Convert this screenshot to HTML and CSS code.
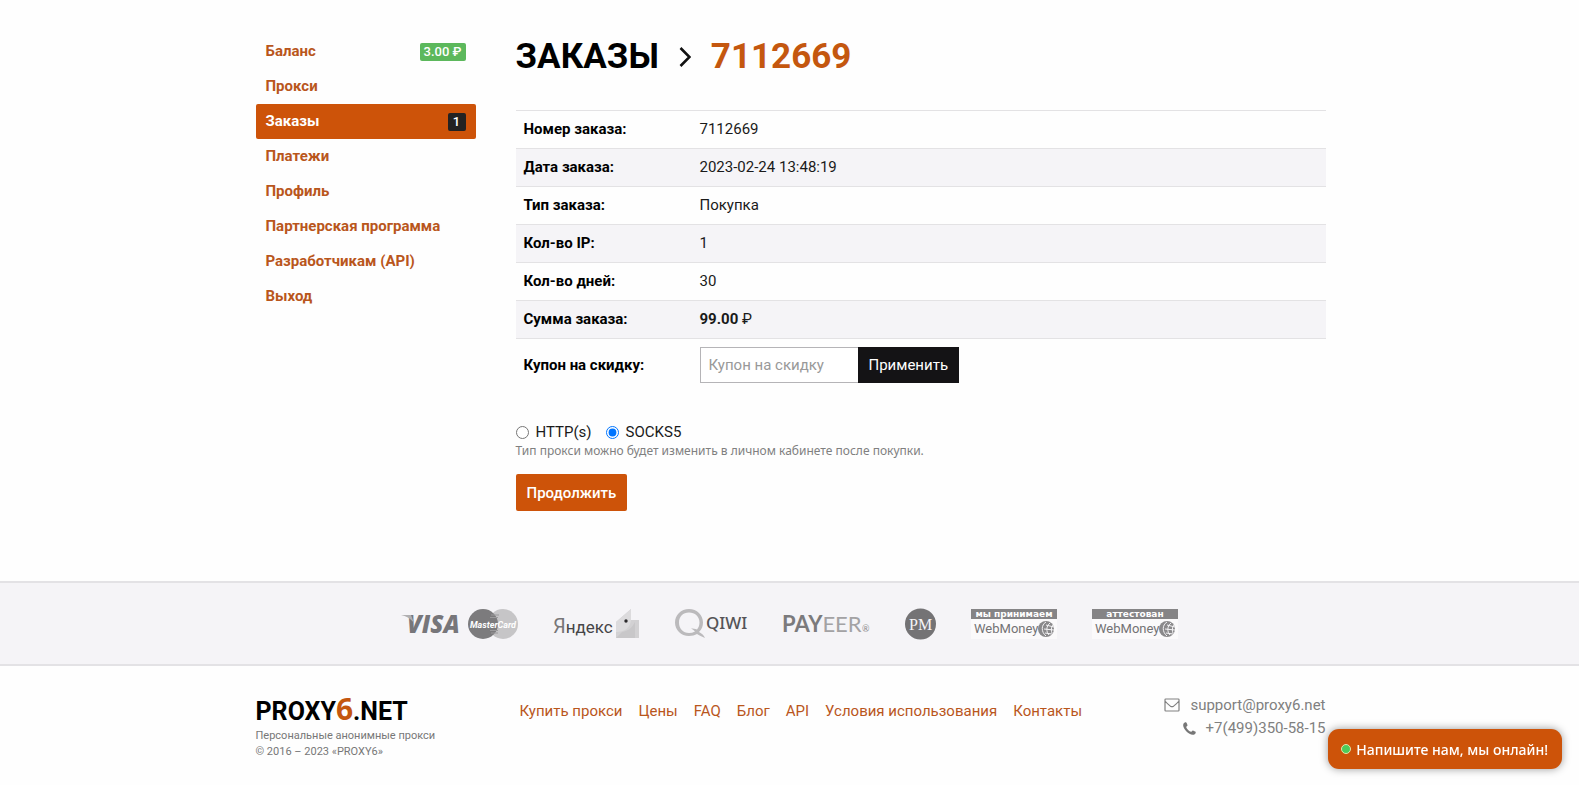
FILE: index.html
```html
<!DOCTYPE html>
<html lang="ru">
<head>
<meta charset="utf-8">
<meta name="viewport" content="width=device-width, initial-scale=1">
<title>Заказ 7112669 — PROXY6.NET</title>
<link rel="stylesheet" href="styles.css">
</head>
<body>
<main class="container main">
  <nav class="menu" aria-label="Личный кабинет">
    <a class="menu-item" href="#">Баланс <span class="badge badge-green">3.00 ₽</span></a>
    <a class="menu-item" href="#">Прокси</a>
    <a class="menu-item active" href="#" aria-current="page">Заказы <span class="badge badge-dark">1</span></a>
    <a class="menu-item" href="#">Платежи</a>
    <a class="menu-item" href="#">Профиль</a>
    <a class="menu-item" href="#">Партнерская программа</a>
    <a class="menu-item" href="#">Разработчикам (API)</a>
    <a class="menu-item" href="#">Выход</a>
  </nav>
  <section class="content">
    <h1 class="title">
      <span>ЗАКАЗЫ</span>
      <svg class="chevron" viewBox="0 0 12 20" width="12" height="20" aria-hidden="true"><path d="M1.500 1 10.500 10l-9 9" fill="none" stroke="#111" stroke-width="2.600"/></svg>
      <span class="accent">7112669</span>
    </h1>
    <table class="order">
      <tr><th scope="row">Номер заказа:</th><td>7112669</td></tr>
      <tr><th scope="row">Дата заказа:</th><td>2023-02-24 13:48:19</td></tr>
      <tr><th scope="row">Тип заказа:</th><td>Покупка</td></tr>
      <tr><th scope="row">Кол-во IP:</th><td>1</td></tr>
      <tr><th scope="row">Кол-во дней:</th><td>30</td></tr>
      <tr><th scope="row">Сумма заказа:</th><td><b>99.00</b> ₽</td></tr>
      <tr>
        <th scope="row"><label for="coupon">Купон на скидку:</label></th>
        <td>
          <form class="coupon">
            <input class="coupon-input" id="coupon" type="text" placeholder="Купон на скидку">
            <button class="coupon-button" type="button">Применить</button>
          </form>
        </td>
      </tr>
    </table>
    <form class="type-form">
      <div class="types">
        <label class="type"><input type="radio" name="type" value="http">HTTP(s)</label>
        <label class="type"><input type="radio" name="type" value="socks" checked>SOCKS5</label>
      </div>
      <p class="hint">Тип прокси можно будет изменить в личном кабинете после покупки.</p>
      <button class="submit" type="button">Продолжить</button>
    </form>
  </section>
</main>

<section class="payments" aria-label="Способы оплаты">
  <svg width="117" height="32" viewBox="0 0 117 32">
    <text x="6" y="25" class="logo-visa">VISA</text>
    <path d="M0 7h10l3 8C9 10 5 8 0 7z" fill="#b0afb1"/>
    <circle cx="102" cy="16" r="15" fill="#c6c5c7"/>
    <circle cx="82" cy="16" r="15" fill="#7c7b7d"/>
    <path d="M90 7h8M89 9.500h8M89 22.500h8M90 25h7" stroke="#9b9a9c" stroke-width="1"/>
    <text x="92" y="20" text-anchor="middle" class="logo-master">MasterCard</text>
  </svg>
  <svg width="87" height="32" viewBox="0 0 87 32">
    <text x="0" y="25" class="logo-yandex"><tspan class="logo-ya">Я</tspan>ндекс</text>
    <path d="M63 14 78 1v11h8v18H63z" fill="#d2d1d3"/>
    <path d="M63 14 78 1v11c-1 8-6 12-15 12z" fill="#dcdbdd"/>
    <path d="M69 24c6-1 10-4 13-10v16H63z" fill="#c8c7c9"/>
    <circle cx="73" cy="13" r="1.700" fill="#2a292b"/>
  </svg>
  <svg width="73" height="32" viewBox="0 0 73 32">
    <path fill-rule="evenodd" d="M14 1C6 1 0 7 0 14.500S6 28 14 28c3 0 6-1 8-2 2 1 5 3 8 4-1-3-4-5-6-6 3-3 4-6 4-9.500C28 7 22 1 14 1zm0 3.500c6 0 10.500 4 10.500 10 0 3-1 5-2.500 7-2-1-4-1-6-1 2 1 3 2 4 3-2 1-4 1.500-6 1.500-6 0-10-4.500-10-10.500s4-10 10-10z" fill="#bbbabc"/>
    <text x="31" y="21" class="logo-qiwi">QIWI</text>
  </svg>
  <svg width="87" height="32" viewBox="0 0 87 32">
    <text x="-1" y="24" class="logo-payeer"><tspan class="strong">PAY</tspan>EER</text>
    <text x="79" y="24" class="logo-reg">®</text>
  </svg>
  <svg width="31" height="32" viewBox="0 0 31 32">
    <circle cx="15.500" cy="16" r="15.500" fill="#747375"/>
    <text x="4" y="22" class="logo-pm">PM</text>
  </svg>
  <svg width="86" height="32" viewBox="0 0 86 32">
    <path d="M0 1h86v30H0z" fill="#fbfafb"/><path d="M0 1h86v10H0z" fill="#858486"/>
    <text x="43" y="9" text-anchor="middle" class="logo-wm-top">мы принимаем</text>
    <text x="3" y="25" class="logo-wm">WebMoney</text>
    <circle cx="75" cy="21" r="8" fill="#8a898b"/>
    <path d="M75 14c-5 3-5 10 0 14M79 15c-4 3-4 9-1 12M82 17c-2 2-2 6-1 8M75 17l8 2M73 21l10 1M74 25l7 1" fill="none" stroke="#f4f3f5" stroke-width="1"/>
  </svg>
  <svg width="86" height="32" viewBox="0 0 86 32">
    <path d="M0 1h86v30H0z" fill="#fbfafb"/><path d="M0 1h86v10H0z" fill="#858486"/>
    <text x="43" y="9" text-anchor="middle" class="logo-wm-top">аттестован</text>
    <text x="3" y="25" class="logo-wm">WebMoney</text>
    <circle cx="75" cy="21" r="8" fill="#8a898b"/>
    <path d="M75 14c-5 3-5 10 0 14M79 15c-4 3-4 9-1 12M82 17c-2 2-2 6-1 8M75 17l8 2M73 21l10 1M74 25l7 1" fill="none" stroke="#f4f3f5" stroke-width="1"/>
  </svg>
</section>

<footer class="container footer">
  <div class="brand">
    <a class="brand-name" href="#">PROXY<span class="brand-six">6</span>.NET</a>
    <p class="brand-note">Персональные анонимные прокси</p>
    <p class="brand-note">© 2016 – 2023 «PROXY6»</p>
  </div>
  <nav class="links" aria-label="Разделы сайта">
    <a href="#">Купить прокси</a>
    <a href="#">Цены</a>
    <a href="#">FAQ</a>
    <a href="#">Блог</a>
    <a href="#">API</a>
    <a href="#">Условия использования</a>
    <a href="#">Контакты</a>
  </nav>
  <address class="contacts">
    <a href="mailto:support@proxy6.net"><svg width="16" height="14" viewBox="0 0 16 14" aria-hidden="true"><path d="M1.700 1h12.600q.7 0 .7.7v10.600q0 .7-.7.7H1.700q-.7 0-.7-.7V1.700Q1 1 1.700 1zM1 3c2 2.500 4 4 5.500 5.200q1.500 1 3 0C11 7 13 5.500 15 3" fill="none" stroke="#808080" stroke-width="1.200"/></svg>support@proxy6.net</a>
    <a href="tel:+74993505815"><svg width="13" height="13" viewBox="0 0 12 12" aria-hidden="true"><path d="M.3 2C.7.8 1.700.2 2.800.2c.5.500 1.200 1.900 1.400 2.700 0 .6-1.300 1.200-1.300 1.700C3.400 6.200 5.800 8.600 7.400 9.100c.5 0 1.100-1.300 1.700-1.300.8.2 2.200.9 2.700 1.400 0 1.100-.6 2.100-1.800 2.500-1.200.4-2.600 0-4-.8C4 9.800 2.200 8 1.100 6 .3 4.600-.1 3.200.3 2z" fill="#777"/></svg>+7(499)350-58-15</a>
  </address>
</footer>
<button class="chat" type="button"><span class="chat-dot"></span>Напишите нам, мы онлайн!</button>
</body>
</html>
```
FILE: styles.css
```css
* { box-sizing: border-box; }
body {
  margin: 0;
  background: #fefefe;
  color: #1a1a1a;
  font: 15px/22px Roboto, "Liberation Sans", sans-serif;
}
a { color: #b9561c; text-decoration: none; }
p { margin: 0; }
button, input { font: inherit; }
button { cursor: pointer; }

.container {
  max-width: 1102px;
  margin: 0 auto;
  padding: 0 15px 0 17px;
}

.main {
  display: flex;
  gap: 40px;
  padding-top: 34px;
  padding-bottom: 70px;
}

.menu { flex: 0 0 220px; }
.menu-item {
  display: flex;
  align-items: baseline;
  justify-content: space-between;
  height: 35px;
  padding: 6px 10px 0;
  border-radius: 2px;
  font-weight: 700;
}
.menu-item.active { background: #cd5309; color: #fff; }
.badge {
  min-width: 18px;
  padding: 0 4px;
  border-radius: 2px;
  color: #fff;
  font-size: 13px;
  font-weight: 500;
  line-height: 18px;
  text-align: center;
}
.badge-green { background: #5cb85c; }
.badge-dark { background: #222; }

.content { flex: 1; min-width: 0; }
.title {
  display: flex;
  align-items: center;
  gap: 20px;
  margin: 0 0 30px;
  color: #000;
  font-size: 35px;
  line-height: 46px;
  font-weight: 700;
}
.chevron { flex: none; }
.accent { color: #c4570f; }

.order { width: 100%; border-collapse: collapse; }
.order th, .order td {
  padding: 8px;
  border-top: 1px solid #e3e2e4;
  text-align: left;
  line-height: 21px;
}
.order th { width: 176px; font-weight: 700; color: #000; }
.order td { font-weight: 400; }
.order tr:nth-child(even) { background: #f5f4f7; }
.coupon { display: flex; }
.coupon-input {
  width: 158px;
  height: 36px;
  padding: 0 8px;
  border: 1px solid #b5b4b7;
  border-right: 0;
  border-radius: 0;
  background: #fff;
}
.coupon-input::placeholder { color: #999; }
.coupon-button {
  height: 36px;
  padding: 0 11px;
  border: 0;
  background: #141315;
  color: #fff;
}

.type-form { margin-top: 30px; }
.types { display: flex; gap: 14px; }
.type { display: flex; align-items: center; gap: 7px; }
.type input { width: 13px; height: 13px; margin: 0; }
.hint {
  color: #808080;
  font: 12px/16px "Noto Sans", sans-serif;
}
.submit {
  height: 37px;
  margin-top: 15px;
  padding: 0 11px;
  border: 0;
  border-radius: 2px;
  background: #cd5309;
  color: #fff;
  font-weight: 500;
}

.payments {
  display: flex;
  flex-wrap: wrap;
  align-items: center;
  justify-content: center;
  gap: 35px;
  padding: 25px 0 24px;
  border: solid #e3e2e5;
  border-width: 2px 0;
  background: #f5f4f7;
}
.logo-visa { font: italic 800 24px "Open Sans", sans-serif; fill: #77767a; }
.logo-master { font: italic 700 9px Roboto, sans-serif; fill: #fff; }
.logo-yandex { font: 17px Roboto, sans-serif; fill: #464547; }
.logo-ya { font-size: 20px; fill: #777678; }
.logo-qiwi { font: 500 17px "Noto Sans", sans-serif; fill: #555457; }
.logo-payeer { font: 22px Lato, sans-serif; fill: #a3a2a4; }
.logo-payeer .strong { fill: #7b7a7c; font-weight: 700; }
.logo-reg { font: 9px Lato, sans-serif; fill: #8b8a8c; }
.logo-pm { font: 16px "Liberation Serif", serif; fill: #f5f4f7; }
.logo-wm-top { font: 700 9px "DejaVu Sans", sans-serif; fill: #fff; }
.logo-wm { font: 13px Roboto, sans-serif; fill: #737274; }

.footer {
  display: flex;
  align-items: flex-start;
  padding-top: 28px;
}
.brand { flex: 0 0 264px; }
.brand-name {
  display: block;
  color: #000;
  font-size: 25px;
  line-height: 32px;
  font-weight: 700;
}
.brand-six { color: #c4570f; font: 700 30px/30px "Open Sans", sans-serif; }
.brand-note { color: #777; font-size: 11px; line-height: 16px; }
.links { display: flex; flex: 1; flex-wrap: wrap; gap: 4px 16px; padding-top: 6px; }
.contacts {
  display: flex;
  flex-direction: column;
  align-items: flex-end;
  gap: 1px;
  font-style: normal;
}
.contacts a { display: flex; align-items: center; gap: 10px; color: #808080; }

.chat {
  position: fixed;
  right: 17px;
  bottom: 16px;
  display: flex;
  align-items: center;
  gap: 5px;
  height: 40px;
  padding: 0 14px 0 13px;
  border: 0;
  border-radius: 11px;
  background: #cd5309;
  box-shadow: 0 0 8px rgba(0, 0, 0, .4);
  color: #fff;
  font: 500 14px "Noto Sans", sans-serif;
}
.chat-dot {
  width: 10px;
  height: 10px;
  border: 1px solid #e6e3a8;
  border-radius: 50%;
  background: #4ccb5a;
}
```
